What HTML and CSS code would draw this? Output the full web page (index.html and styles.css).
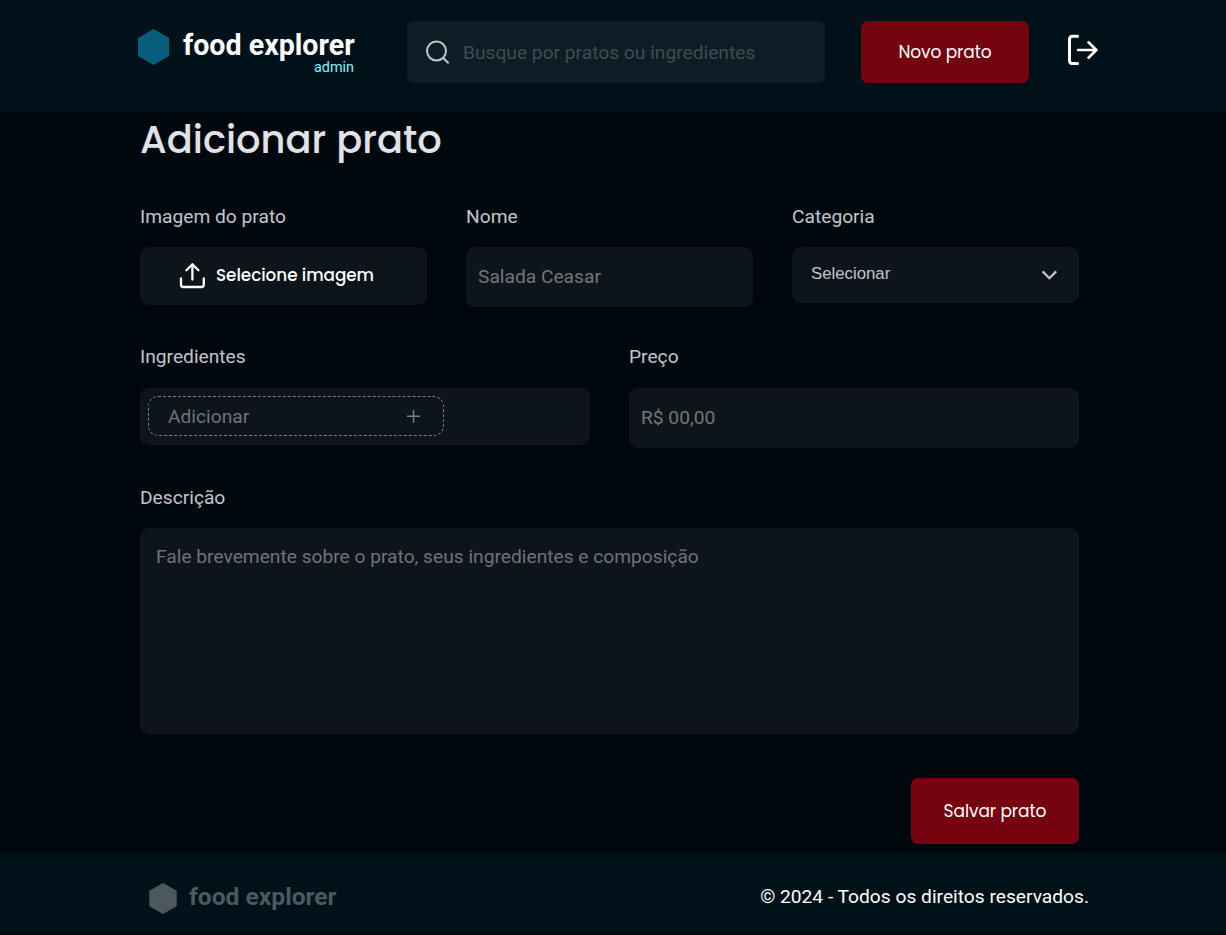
FILE: index.html
```html
<!DOCTYPE html>
<html lang="pt-BR">
<head>
<meta charset="utf-8">
<title>food explorer - Adicionar prato</title>
<link rel="stylesheet" href="styles.css">
</head>
<body>
<header class="header">
  <a class="brand">
    <svg class="brand-mark" width="31" height="36" viewBox="0 0 31 36"><path fill="#065e7c" d="M15.500 0L31 9v18l-15.500 9L0 27V9z"/></svg>
    <span class="brand-text"><strong class="brand-name">food explorer</strong><span class="brand-role">admin</span></span>
  </a>
  <label class="search">
    <svg width="24" height="24" viewBox="0 0 24 24" fill="none" stroke="#c4c4cc" stroke-width="2" stroke-linecap="round"><circle cx="10.500" cy="11" r="9.500"/><path d="M17.300 18l4.700 4.700"/></svg>
    <input class="search-input" type="text" placeholder="Busque por pratos ou ingredientes">
  </label>
  <button class="button button-new" type="button"><span>Novo prato</span></button>
  <svg class="logout" width="32" height="32" viewBox="0 0 32 32" fill="none" stroke="#fff" stroke-linecap="round" stroke-linejoin="round"><path stroke-width="3" d="M10.500 2.300H5.500Q2.500 2.300 2.500 5.300v21.200Q2.500 29.500 5.500 29.500h5"/><path stroke-width="2.600" d="M11 16h18.500M21.500 8.300l7.800 7.700-7.800 7.700"/></svg>
</header>
<main class="main">
  <h1 class="title">Adicionar prato</h1>
  <form class="form">
    <div class="row row-three">
      <div class="field">
        <label class="label">Imagem do prato</label>
        <div class="control upload">
          <svg width="26" height="26" viewBox="0 0 26 26" fill="none" stroke="#fff" stroke-width="2.300" stroke-linecap="round" stroke-linejoin="round"><path d="M13.400 16.500V1.500M7.400 7.200l6-6 6 6M2 15.500v6.200q0 2.300 2.300 2.300h18.200q2.300 0 2.300-2.300V15.500"/></svg>
          <span class="upload-text">Selecione imagem</span>
        </div>
      </div>
      <div class="field">
        <label class="label">Nome</label>
        <input class="control text-input" type="text" placeholder="Salada Ceasar">
      </div>
      <div class="field">
        <label class="label">Categoria</label>
        <div class="control select">
          <span class="select-value">Selecionar</span>
          <svg width="16" height="10" viewBox="0 0 16 10" fill="none" stroke="#c4c4cc" stroke-width="2.300"><path d="M1.600 1.400l6.800 6.800 6.800-6.800"/></svg>
        </div>
      </div>
    </div>
    <div class="row row-two">
      <div class="field">
        <label class="label">Ingredientes</label>
        <div class="control ingredients">
          <div class="tag">
            <input class="tag-input" type="text" placeholder="Adicionar">
            <svg width="14" height="14" viewBox="0 0 14 14" stroke="#7c7c8a" stroke-width="1.500"><path d="M6.500 .8v13M0 7.300h13"/></svg>
          </div>
        </div>
      </div>
      <div class="field">
        <label class="label">Preço</label>
        <input class="control text-input" type="text" placeholder="R$ 00,00">
      </div>
    </div>
    <div class="field">
      <label class="label">Descrição</label>
      <textarea class="control description" placeholder="Fale brevemente sobre o prato, seus ingredientes e composição"></textarea>
    </div>
    <button class="button button-save" type="button"><span>Salvar prato</span></button>
  </form>
</main>
<footer class="footer">
  <div class="footer-brand">
    <svg width="28" height="31" viewBox="0 0 28 31"><path fill="#4d585e" d="M14 0l13.700 7.700v15.600L14 31 .3 23.300V7.700z"/></svg>
    <strong class="footer-name">food explorer</strong>
  </div>
  <span class="copyright">© 2024 - Todos os direitos reservados.</span>
</footer>
</body>
</html>
```
FILE: styles.css
```css
* { box-sizing: border-box; margin: 0; padding: 0; }
body { height: 935px; overflow: hidden; background: #00080e; color: #fff; font-family: Roboto, sans-serif; }
input, textarea, button { border: 0; outline: 0; background: none; font: inherit; }

.header { display: flex; align-items: flex-start; height: 112px; padding: 21px 0 0 138px; background: #001119; }
.brand { display: flex; width: 269px; padding-top: 7px; gap: 14px; }
.brand-mark { margin-top: .5px; }
.brand-text { display: flex; flex-direction: column; width: 172px; padding-top: 2px; }
.brand-name { font-size: 28.6px; line-height: 31px; white-space: nowrap; }
.brand-role { align-self: flex-end; margin-right: 1px; font-size: 14.4px; line-height: 14px; color: #82f3ff; }
.search { display: flex; align-items: center; gap: 13px; width: 418px; height: 62px; padding: 0 19px; border-radius: 6px; background: #0d1d25; }
.search-input { flex: 1; min-width: 0; height: 40px; font-size: 19.2px; }
.search-input::placeholder { color: #414b51; }
.button { width: 168px; border-radius: 7px; background: #750310; color: #fff; font-family: Poppins, Inter, sans-serif; font-size: 17px; letter-spacing: -.1px; text-align: center; }
.button-new { height: 62px; margin-left: 36px; }
.logout { margin: 13px 0 0 38px; }

.main { width: 939px; height: 740px; margin-left: 140px; }
.title { padding-top: 1px; font-family: Poppins, Inter, sans-serif; font-weight: 500; font-size: 38.4px; line-height: 54px; color: #e1e1e6; white-space: nowrap; }
.form { display: flex; flex-direction: column; padding-top: 38px; }
.row { display: grid; column-gap: 39px; }
.row-three { grid-template-columns: repeat(3, 1fr); height: 140px; }
.row-two { grid-template-columns: repeat(2, 1fr); height: 141px; }
.field { display: flex; flex-direction: column; }
.label { height: 42px; font-size: 19.2px; line-height: 24px; color: #c4c4cc; }
.row-two .label { height: 43px; }
.control { width: 100%; border-radius: 9px; background: #0d151b; }
.upload { display: flex; align-items: center; gap: 11px; height: 58px; padding-left: 39px; font-family: Poppins, Inter, sans-serif; font-weight: 500; font-size: 16.8px; letter-spacing: -.03px; }
.upload-text { margin-top: -2px; }
.text-input { height: 60px; padding: 0 12px 1px; font-size: 19.2px; }
.text-input::placeholder { color: #757575; }
.select { display: flex; align-items: center; justify-content: space-between; height: 56px; padding: 0 22px 0 19px; font: 16.8px "Liberation Sans", sans-serif; color: #c4c4cc; }
.select-value { margin-top: -3px; }
.ingredients { height: 57px; padding: 8px; }
.tag { display: flex; align-items: center; width: 296px; height: 40px; padding: 0 22px 0 19px; border: 1px dashed #7c7c8a; border-radius: 10px; }
.tag-input { flex: 1; min-width: 0; font-size: 19.2px; }
.tag-input::placeholder, .description::placeholder { color: #71717e; }
.description { height: 206px; padding: 17px 16px 16px; font-size: 19.2px; line-height: 24px; resize: none; }
.button-save { align-self: flex-end; height: 66px; margin-top: 44px; }

.footer { display: flex; align-items: center; justify-content: space-between; height: 81px; padding: 0 137px 0 149px; background: #001119; }
.footer-brand { display: flex; align-items: center; gap: 12px; padding-top: 11px; }
.footer-name { margin-top: -4px; font-size: 24.6px; color: #4d585e; }
.copyright { padding-top: 7px; font-size: 19.2px; }
```
